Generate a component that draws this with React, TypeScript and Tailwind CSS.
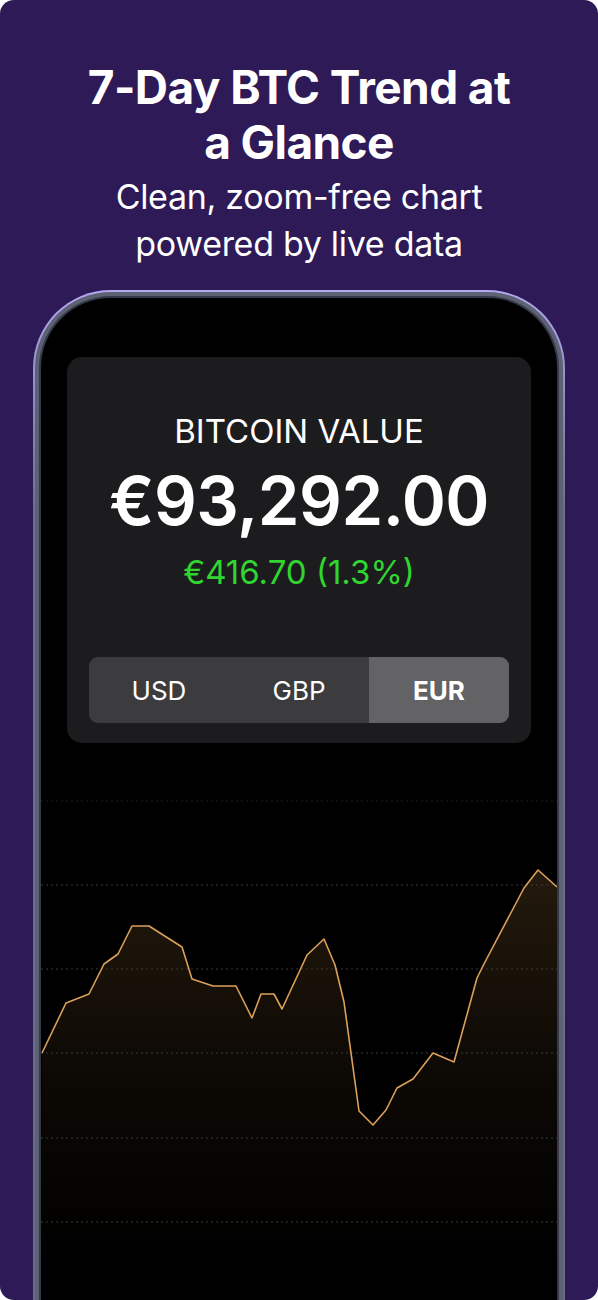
import { FC } from "react"

const points: [number, number][] = [
  [1, 273], [25, 223], [48, 214], [63, 184], [77, 174], [91, 146], [108, 146],
  [141, 167], [151, 199], [172, 206], [195, 206], [211, 238], [220, 214], [233, 214],
  [241, 229], [266, 175], [283, 159], [294, 185], [303, 222], [318, 331], [332, 345],
  [345, 330], [356, 308], [372, 299], [392, 273], [413, 282], [436, 198], [444, 182],
  [483, 108], [497, 90], [516, 107],
]

const gridLines = [21, 105, 189, 273, 358, 442]

const Chart: FC = (): JSX.Element => {
  const line = points.map((p) => p.join(",")).join(" ")
  const area = `0,480 ${line} 516,480`
  return (
    <svg width="516" height="480" viewBox="0 0 516 480" className="block">
      <defs>
        <linearGradient id="fill" x1="0" y1="0" x2="0" y2="1">
          <stop offset="0%" stopColor="#e0a050" stopOpacity="0.16" />
          <stop offset="50%" stopColor="#e0a050" stopOpacity="0.06" />
          <stop offset="100%" stopColor="#e0a050" stopOpacity="0" />
        </linearGradient>
      </defs>
      <polygon points={area} fill="url(#fill)" />
      {gridLines.map((y, i) => (
        <line
          key={y}
          x1="0"
          x2="516"
          y1={y}
          y2={y}
          stroke={i === 0 ? "#1c1c1c" : "#3a3a3a"}
          strokeWidth="1"
          strokeDasharray="2 3"
        />
      ))}
      <polyline points={line} fill="none" stroke="#dca05a" strokeWidth="1.6" strokeLinejoin="round" />
    </svg>
  )
}

const Segment: FC = (): JSX.Element => {
  return (
    <div className="mx-[22px] mt-[66px] flex h-[66px] overflow-hidden rounded-[9px] bg-[#3c3c3e] text-[26px] text-white">
      <div className="flex flex-1 items-center justify-center">USD</div>
      <div className="flex flex-1 items-center justify-center">GBP</div>
      <div className="flex flex-1 items-center justify-center bg-[#636366] font-bold">EUR</div>
    </div>
  )
}

const App: FC = (): JSX.Element => {
  return (
    <div className="w-[598px] h-[1300px] overflow-hidden rounded-[14px] bg-[#2d1a56] flex flex-col items-center font-['Inter',sans-serif] text-white">
      <h1 className="pt-[60px] text-center text-[46px] font-bold leading-[55px] tracking-[-0.6px]">
        7-Day BTC Trend at
        <br />
        a Glance
      </h1>
      <p className="mt-[3px] text-center text-[34px] leading-[47px] tracking-[-0.3px]">
        Clean, zoom-free chart
        <br />
        powered by live data
      </p>

      <div className="mt-[23px] w-[532px] h-[1100px] shrink-0 rounded-[78px] bg-gradient-to-b from-[#b3a8f0] via-[#6c7188] via-20% to-[#676d80] p-[2px]">
        <div className="h-full rounded-[76px] bg-[#5c6274] p-[4px]">
          <div className="h-full rounded-[72px] bg-[#34384a] p-[2px]">
            <div className="h-full overflow-hidden rounded-[70px] bg-black pt-[59px]">
              <div className="mx-[26px] h-[386px] rounded-[15px] bg-[#1c1c1e] pt-[54px] flex flex-col">
                <div className="text-center text-[33px] leading-[40px] text-white">BITCOIN VALUE</div>
                <div className="mt-[14px] text-center text-[67px] font-semibold leading-[72px] tracking-[-0.5px]">€93,292.00</div>
                <div className="mt-[16px] text-center text-[33px] leading-[38px] text-[#30d530]">€416.70 (1.3%)</div>
                <Segment />
              </div>
              <div className="mt-[37px]">
                <Chart />
              </div>
            </div>
          </div>
        </div>
      </div>
    </div>
  )
}

export default App
